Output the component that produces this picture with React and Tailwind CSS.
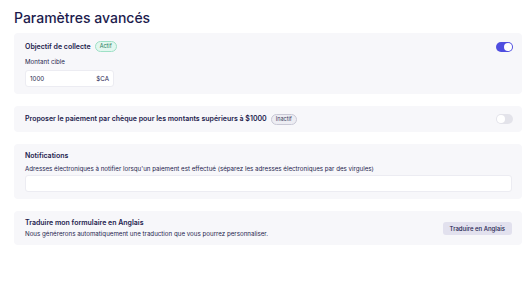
export default function App() {
  return (
    <div className="min-h-[300px] bg-white text-[#1c1b4d] pl-[14px] pr-[3px] pt-[8px]" style={{ fontFamily: 'Inter, "Noto Sans", sans-serif' }}>
      <h1 className="text-[14px] font-medium leading-[20px] mb-[5px]">Paramètres avancés</h1>

      <div className="flex flex-col gap-[12px]">
        {/* Objectif de collecte */}
        <div className="bg-[#f7f7fa] rounded-[4px] pl-[11px] pr-[9px] pt-[8px] pb-[7px]">
          <div className="flex items-center justify-between">
            <div className="flex items-center gap-[4px]">
              <span className="text-[7px] leading-[10px] font-semibold">Objectif de collecte</span>
              <span className="text-[5.5px] leading-[7px] px-[4px] py-[1px] rounded-full bg-[#e2f7ef] border border-[#9ee0c6] text-[#1f7a5a]">Actif</span>
            </div>
            <div className="w-[17px] h-[10px] rounded-full bg-[#4f4ee0] flex items-center justify-end pr-[1px]">
              <div className="w-[8px] h-[8px] rounded-full bg-white" />
            </div>
          </div>
          <div className="text-[6.2px] leading-[9px] mt-[5px] mb-[4px]">Montant cible</div>
          <div className="w-[89px] h-[17px] bg-white border border-[#ececf2] rounded-[3px] flex items-center justify-between px-[4px] text-[6.2px]">
            <span>1000</span>
            <span>$CA</span>
          </div>
        </div>

        {/* Chèque */}
        <div className="bg-[#f7f7fa] rounded-[4px] pl-[11px] pr-[9px] h-[26px] flex items-center justify-between">
          <div className="flex items-center gap-[4px]">
            <span className="text-[7px] leading-[10px] font-semibold">Proposer le paiement par chèque pour les montants supérieurs à $1000</span>
            <span className="text-[5.5px] leading-[7px] px-[4px] py-[1px] rounded-full bg-[#ededf3] border border-[#c9c9d6] text-[#3a3a5c]">Inactif</span>
          </div>
          <div className="w-[17px] h-[10px] rounded-full bg-[#e3e3ea] flex items-center pl-[1px]">
            <div className="w-[8px] h-[8px] rounded-full bg-white" />
          </div>
        </div>

        {/* Notifications */}
        <div className="bg-[#f7f7fa] rounded-[4px] pl-[11px] pr-[10px] pt-[7px] pb-[7px]">
          <div className="text-[7px] leading-[10px] font-semibold">Notifications</div>
          <div className="text-[6.2px] leading-[9px] mt-[3px] mb-[2px]">Adresses électroniques à notifier lorsqu'un paiement est effectué (séparez les adresses électroniques par des virgules)</div>
          <div className="h-[17px] bg-white border border-[#ececf2] rounded-[3px]" />
        </div>

        {/* Traduire */}
        <div className="bg-[#f7f7fa] rounded-[4px] pl-[11px] pr-[10px] py-[7px] flex items-center justify-between">
          <div>
            <div className="text-[7px] leading-[10px] font-semibold">Traduire mon formulaire en Anglais</div>
            <div className="text-[6.2px] leading-[9px] mt-[1px]">Nous générerons automatiquement une traduction que vous pourrez personnaliser.</div>
          </div>
          <button className="h-[13px] px-[7px] rounded-[3px] bg-[#e2e1ee] text-[6px] font-medium">Traduire en Anglais</button>
        </div>
      </div>
    </div>
  );
}
